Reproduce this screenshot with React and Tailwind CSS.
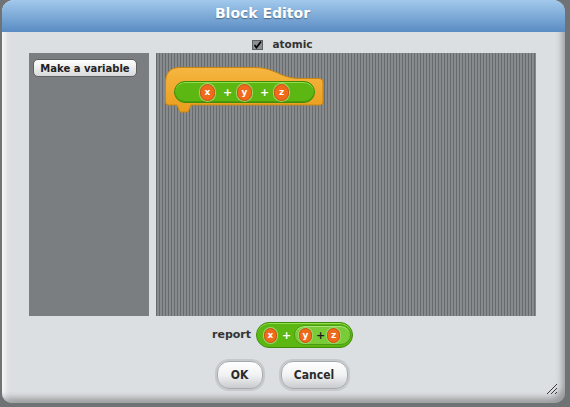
import React from "react";

const Slot = ({ label }) => (
  <div className="w-[15px] h-[17px] rounded-full bg-[#f06a1c] border border-[#c9500f] shadow-[0_0_0_1px_#9bd766] flex items-center justify-center text-white text-[9px] font-bold leading-none">
    {label}
  </div>
);

const SmallSlot = ({ label }) => (
  <div className="w-[13px] h-[15px] rounded-full bg-[#f06a1c] border border-[#c9500f] shadow-[0_0_0_1px_#9bd766] flex items-center justify-center text-white text-[9px] font-bold leading-none">
    {label}
  </div>
);

const Plus = () => (
  <span className="w-[6px] text-center text-white text-[11px] font-bold leading-none">+</span>
);

const HatBlock = () => (
  <div className="absolute left-[9px] top-[13px] w-[159px] h-[47px]">
    <svg width="159" height="47" viewBox="0 0 159 47" className="absolute inset-0">
      <defs>
        <linearGradient id="hat" x1="0" y1="0" x2="0" y2="1">
          <stop offset="0" stopColor="#f6b640" />
          <stop offset="1" stopColor="#e99d1c" />
        </linearGradient>
      </defs>
      <path
        d="M0.5,16 Q0.5,2 14,1.5 L90,1.5 C110,1.5 115,12.5 135,12.5 L154,12.5 Q158,12.5 158,16 L158,36 Q158,39 155,39 L26,39 L23,46 L15,46 L12,39 L3.5,39 Q0.5,39 0.5,36 Z"
        fill="url(#hat)"
        stroke="#c98510"
        strokeWidth="1"
      />
    </svg>
    <div className="absolute left-[9px] top-[15px] w-[141px] h-[22px] rounded-full bg-[#5cb712] border border-[#3f8c0c] shadow-[inset_0_1px_0_#8fe04a,inset_0_-1px_0_#4a9a0e] flex items-center justify-center gap-[8px]">
      <Slot label="x" />
      <Plus />
      <Slot label="y" />
      <Plus />
      <Slot label="z" />
    </div>
  </div>
);

export default function App() {
  return (
    <div className="w-[570px] h-[407px] bg-[#707376] overflow-hidden font-['DejaVu_Sans',sans-serif]">
      <div className="relative ml-[2px] w-[563px] h-[403px] bg-[#dcdfe1] rounded-t-[12px] rounded-b-[10px] overflow-hidden flex flex-col shadow-[inset_-6px_-8px_6px_-3px_rgba(0,0,0,0.3),inset_6px_0_5px_-3px_rgba(255,255,255,0.8)]">
        {/* Title */}
        <div className="h-[32px] shrink-0 bg-gradient-to-b from-[#a2c9ec] to-[#5a8cc3] flex items-center justify-center pb-[5px] pr-[42px] text-white text-[14px] font-bold [text-shadow:0_1px_1px_rgba(0,0,0,0.35)]">
          Block Editor
        </div>

        {/* atomic */}
        <div className="h-[21px] shrink-0 flex items-center justify-center gap-[9px] pt-[5px] pr-[2px]">
          <svg width="11" height="10" viewBox="0 0 11 10">
            <rect x="0.5" y="0.5" width="10" height="9" fill="#8d9093" stroke="#5d6062" />
            <path d="M2.5,5 L4.5,7.5 L9,1.5" fill="none" stroke="#000" strokeWidth="1.7" />
          </svg>
          <span className="text-[10.5px] font-bold text-[#333]">atomic</span>
        </div>

        {/* panels */}
        <div className="h-[263px] shrink-0 flex pl-[27px] gap-[7px]">
          <div className="w-[120px] bg-[#7b7e81] pt-[6px] pl-[4px]">
            <div className="w-[104px] h-[18px] rounded-[5px] border border-[#5f6163] bg-gradient-to-b from-white to-[#d8d9da] flex items-center justify-center text-[10px] font-bold text-[#222]">
              Make a variable
            </div>
          </div>
          <div className="relative w-[380px] bg-[repeating-linear-gradient(90deg,#686b6e_0px,#686b6e_1px,#888b8e_1px,#888b8e_3px)]">
            <HatBlock />
          </div>
        </div>

        {/* report */}
        <div className="mt-[6px] h-[26px] shrink-0 flex items-center justify-center gap-[5px] pr-[2px]">
          <span className="text-[11px] font-bold text-[#333]">report</span>
          <div className="w-[97px] h-[26px] rounded-full bg-[#5cb712] border border-[#3f8c0c] shadow-[inset_0_1px_0_#8fe04a] flex items-center pl-[7px] gap-[5px]">
            <SmallSlot label="x" />
            <Plus />
            <div className="ml-[1px] w-[57px] h-[20px] rounded-full bg-[#79cc38] border border-[#4d9a14] shadow-[inset_0_1px_0_#a6e873] flex items-center pl-[4px] gap-[4px]">
              <SmallSlot label="y" />
              <span className="w-[7px] text-center text-[#1d1d1d] text-[11px] font-bold leading-none">+</span>
              <SmallSlot label="z" />
            </div>
          </div>
        </div>

        {/* buttons */}
        <div className="mt-[13px] h-[28px] shrink-0 flex items-center justify-center gap-[18px] pr-[3px]">
          <button className="w-[46px] h-[28px] rounded-[12px] border border-[#a7aaac] bg-gradient-to-b from-white via-[#f1f2f3] to-[#c9cccf] shadow-[0_0_0_2px_#c6c9cb] font-['DejaVu_Sans_Condensed','DejaVu_Sans',sans-serif] font-stretch-condensed text-[12px] font-bold text-[#2b2b2b]">
            OK
          </button>
          <button className="w-[67px] h-[28px] rounded-[12px] border border-[#a7aaac] bg-gradient-to-b from-white via-[#f1f2f3] to-[#c9cccf] shadow-[0_0_0_2px_#c6c9cb] font-['DejaVu_Sans_Condensed','DejaVu_Sans',sans-serif] font-stretch-condensed text-[12px] font-bold text-[#2b2b2b]">
            Cancel
          </button>
        </div>

        {/* resize handle */}
        <svg width="12" height="12" viewBox="0 0 12 12" className="absolute right-[7px] bottom-[8px]">
          <path d="M1,11 L11,1 M5,11 L11,5 M9,11 L11,9" stroke="#3a3a3a" strokeWidth="1" />
        </svg>
      </div>
    </div>
  );
}
